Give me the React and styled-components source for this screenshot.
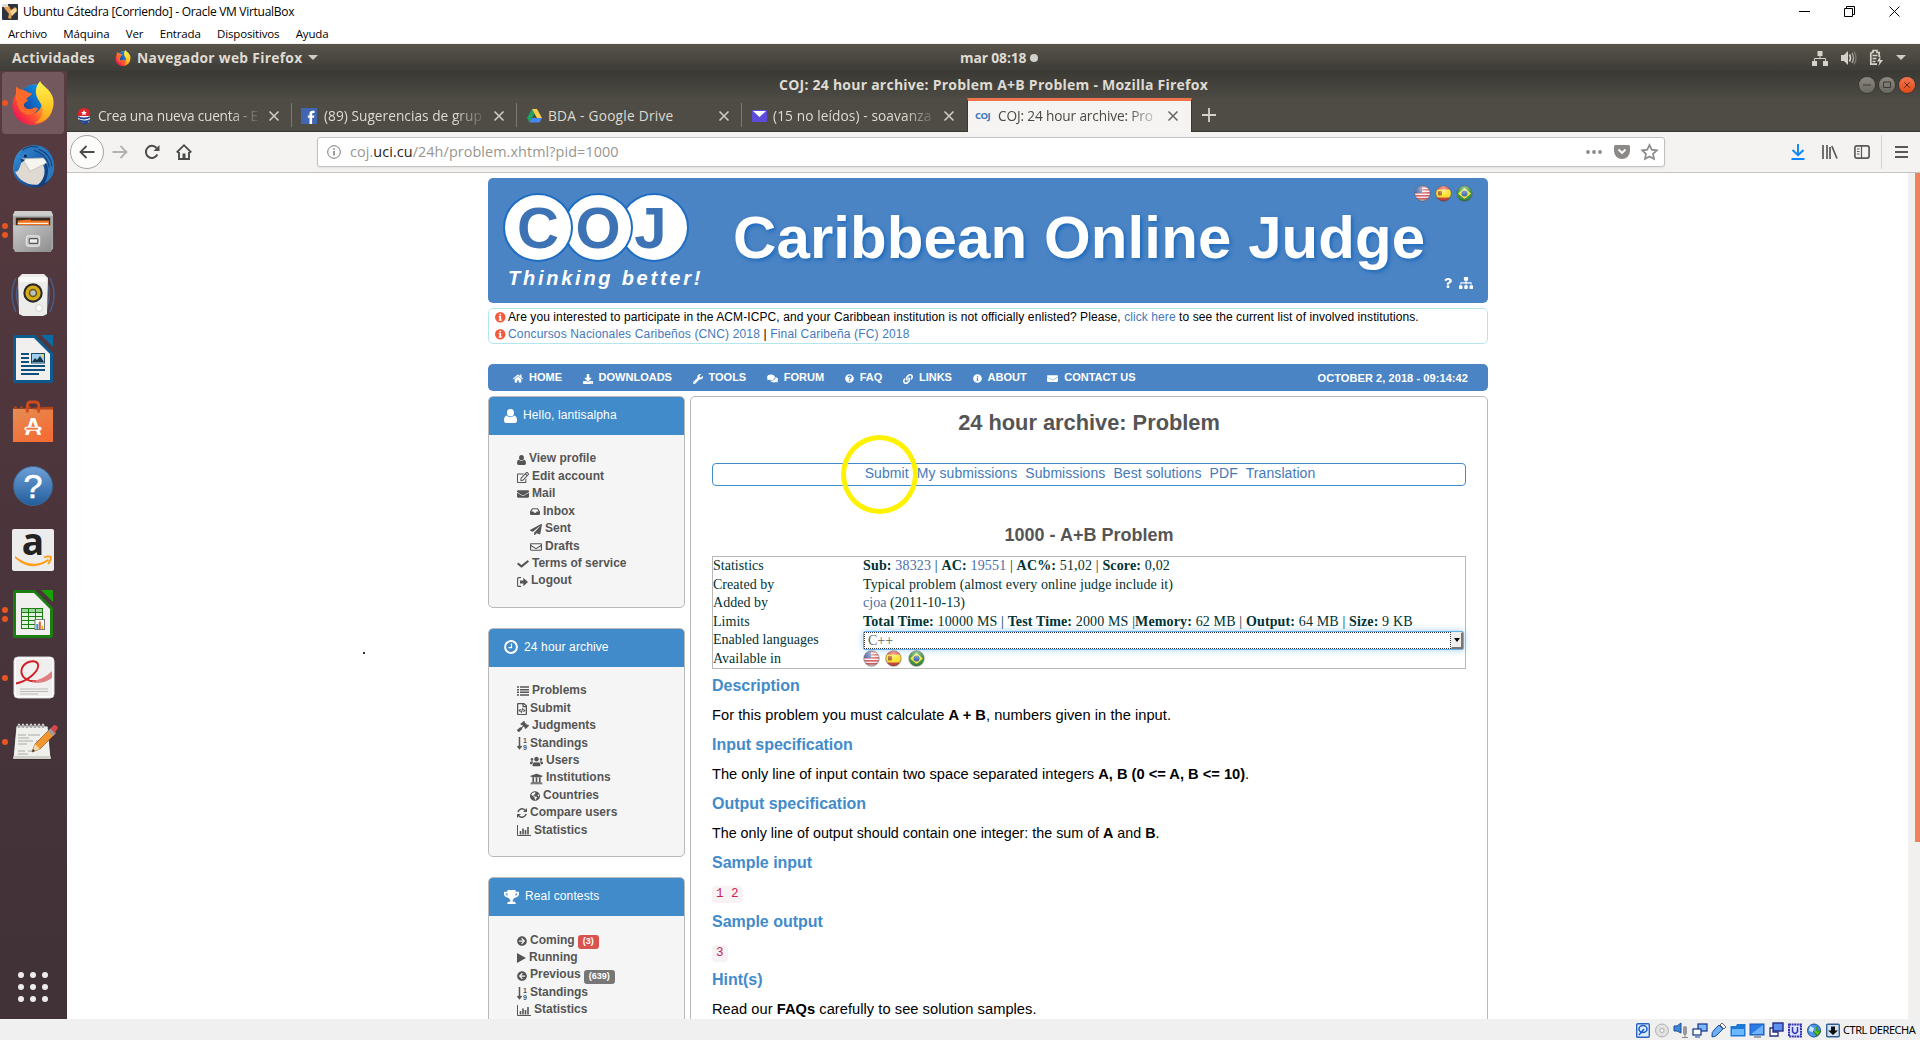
import React from 'react';
import styled, { createGlobalStyle, css } from 'styled-components';
import {
  FaHome, FaDownload, FaWrench, FaComments, FaQuestionCircle, FaLink, FaInfoCircle, FaEnvelope,
  FaRegEdit, FaInbox, FaPaperPlane, FaRegEnvelope, FaCheck,
  FaRegFileCode, FaGavel, FaUsers, FaUniversity, FaGlobeAmericas, FaTrophy,
  FaArrowCircleRight, FaArrowCircleLeft, FaSitemap, FaQuestion,
} from 'react-icons/fa';

const sans = '"Liberation Sans", Arial, sans-serif';
const serif = '"Liberation Serif", "Times New Roman", serif';
const ui = '"Open Sans", "Noto Sans", sans-serif';

const Global = createGlobalStyle`
  * { box-sizing: border-box; }
  body { margin: 0; background: #fff; font-family: ${sans}; overflow: hidden; }
  svg { display: block; flex: none; overflow: visible; }
`;

const Screen = styled.div`
  width: 1920px; height: 1040px; display: flex; flex-direction: column; overflow: hidden; background: #fff;
`;

/* ---------- VirtualBox window ---------- */
const VmTitle = styled.div`
  height: 21px; flex: none; display: flex; align-items: center; padding: 2px 20px 0 2px; background: #fff;
`;
const VmName = styled.span`
  font: 12px/18px ${ui}; color: #000; margin-left: 5px; flex: 1; letter-spacing: -0.29px; white-space: nowrap;
`;
const VmControls = styled.div`display: flex; gap: 34px; align-items: center;`;
const VmMenu = styled.div`
  height: 23px; flex: none; display: flex; gap: 16.3px; padding: 3px 8px 0; font: 11.5px/20px ${ui}; color: #000;
  border-bottom: 1px solid #f0f0f0; letter-spacing: -0.15px;
`;
const VmStatus = styled.div`
  height: 21px; flex: none; background: #f0f0f0; display: flex; align-items: center; justify-content: flex-end;
  gap: 3px; padding: 1px 2px 0 0;
`;
const HostKey = styled.span`
  font: 11px/18px "Noto Sans", sans-serif; color: #000; margin-left: -1px; width: 75px; letter-spacing: -0.45px; white-space: nowrap;
`;

/* ---------- GNOME shell ---------- */
const Panel = styled.div`
  height: 27px; flex: none; display: flex; align-items: center; padding: 0 14px 0 12px; color: #dfdbd2;
  background: linear-gradient(#58544b, #3e3c38); font: 700 13.8px/26px ${ui};
`;
const PanelLeft = styled.div`width: 948px; flex: none; display: flex; align-items: center;`;
const PanelApp = styled.div`display: flex; align-items: center; gap: 6px; margin-left: 20px;`;
const PanelStatus = styled.div`flex: 1; display: flex; align-items: center; gap: 12px; justify-content: flex-end;`;
const PanelText = styled.span`letter-spacing: ${p => p.$ls ?? 0.3}px; white-space: nowrap;`;
const ClockDot = styled.i`width: 8px; height: 8px; border-radius: 50%; background: #d2d0cb; margin: 1px 0 0 4px;`;
const Caret = styled.i`
  border: 5px solid transparent; border-top-color: #cfccc5; border-bottom: 0; margin-left: ${p => p.$ml || 0}px;
`;
const Desktop = styled.div`flex: 1; min-height: 0; display: flex;`;

const Dock = styled.div`
  width: 67px; flex: none; display: flex; flex-direction: column; padding: 1px 0 0 2px;
  background: linear-gradient(#573c41, #4e363c 35%, #47343b 65%, #403237);
`;
const DockItem = styled.div`
  width: 62px; height: 62px; margin-bottom: 1.9px; flex: none; border-radius: 4px; display: flex; align-items: center;
  background: ${p => (p.$active ? '#73595e' : 'transparent')};
`;
const DockDots = styled.div`width: 6px; display: flex; flex-direction: column; gap: 3px;`;
const DockDot = styled.i`width: 6px; height: 6px; border-radius: 50%; background: #e95420;`;
const DockArt = styled.div`margin-left: ${p => p.$ml}px;`;
const AppsGrid = styled.div`
  margin: auto 0 17px 16px; display: grid; grid-template-columns: repeat(3, 6px); gap: 6px;
`;
const AppsDot = styled.i`width: 6px; height: 6px; border-radius: 50%; background: #efecec;`;

/* ---------- Firefox ---------- */
const Browser = styled.div`flex: 1; min-width: 0; display: flex; flex-direction: column;`;
const WinTitle = styled.div`
  height: 27px; flex: none; display: flex; align-items: center; padding: 1px 5px 0 0;
  background: linear-gradient(#3a3934, #4c4a43); color: #dfdbd2; font: 700 14px/24px ${ui};
`;
const WinName = styled.div`flex: 1; text-align: center; padding-left: 65px; letter-spacing: 0.24px; white-space: nowrap;`;
const WinBtn = styled.div`
  width: 16px; height: 16px; margin-left: 4px; border-radius: 50%; display: flex; align-items: center; justify-content: center;
  background: ${p => (p.$close ? 'linear-gradient(#f4764c, #e0491a)' : 'linear-gradient(#8b887f, #6b6862)')};
  box-shadow: 0 0 0 1px #3a3833;
`;
const TabStrip = styled.div`
  height: 34px; flex: none; display: flex; align-items: flex-end; background: #4f4c45; border-bottom: 1px solid #393733;
`;
const Tab = styled.div`
  width: 225px; height: 33px; margin-bottom: ${p => (p.$active ? '-1px' : '0')}; display: flex; align-items: center;
  padding: 2px 13px 0 ${p => p.$pl || 9}px; font: 13.7px/30px ${ui};
  color: ${p => (p.$active ? '#4c4a45' : '#dfdbd2')};
  background: ${p => (p.$active ? '#f5f4f2' : 'linear-gradient(#7c7a74, #7c7a74) right 5px / 1px 24px no-repeat')};
  ${p => p.$active && css`border: 1px solid #393733; border-bottom: 0; border-top: 3px solid #f0744a; height: 34px; padding-top: 0; padding-bottom: 1px; background: #f5f4f2;`}
  ${p => p.$last && css`background: none;`}
`;
const TabText = styled.span`
  flex: 1; min-width: 0; margin: 0 6px 0 ${p => p.$ml || 7}px; overflow: hidden; white-space: nowrap; letter-spacing: ${p => p.$ls ?? -0.3}px;
  mask-image: ${p => (p.$fade ? 'linear-gradient(90deg, #000 calc(100% - 34px), transparent)' : 'none')};
`;
const CojFav = styled.span`width: 17px; font: 700 9.5px/14px ${ui}; color: #3b76bd; letter-spacing: -0.6px; margin-left: -1px;`;
const NewTab = styled.div`width: 33px; height: 33px; display: flex; align-items: center; justify-content: center;`;
const Toolbar = styled.div`
  height: 41px; flex: none; display: flex; align-items: center; background: #f4f3f1; border-bottom: 1px solid #c5c3c0; padding-left: 3px;
`;
const BackBtn = styled.div`
  width: 34px; height: 34px; border-radius: 50%; border: 1px solid #a5a3a0; background: #fcfcfb; display: flex; align-items: center; justify-content: center;
`;
const NavIcon = styled.div`width: 32px; display: flex; justify-content: center;`;
const UrlBar = styled.div`
  width: 1348px; height: 30px; margin-left: 117px; border: 1px solid #c3c1be; border-radius: 3px; background: #fff;
  display: flex; align-items: center; padding: 0 6px 0 9px; box-shadow: 0 1px 2px rgba(0,0,0,.08);
`;
const Url = styled.div`flex: 1; margin-left: 9px; font: 14.4px/24px ${ui}; color: #98968f; letter-spacing: 0.08px; b { font-weight: 400; color: #222; }`;
const UrlActions = styled.div`display: flex; gap: 11.5px; align-items: center;`;
const ToolRight = styled.div`margin-left: auto; display: flex; align-items: center; height: 100%;`;
const MenuBtn = styled.div`width: 39px; height: 34px; margin-left: 3px; border-left: 1px solid #d5d3d0; display: flex; align-items: center; justify-content: center;`;

/* ---------- Page ---------- */
const Viewport = styled.div`flex: 1; min-height: 0; display: flex; position: relative; background: #fff;`;
const Page = styled.div`flex: 1; min-width: 0; overflow: hidden; padding: 5px 0 0 421px;`;
const ScrollTrack = styled.div`width: 12px; flex: none; background: #f1f0ef; padding-left: 7px;`;
const ScrollThumb = styled.div`height: 669px; background: #f0815c;`;
const Speck = styled.i`position: absolute; left: 296px; top: 479px; width: 2px; height: 2px; background: #333;`;
const Container = styled.div`width: 1000px;`;

const Glyph = styled.span`
  width: ${p => p.$w}px; height: ${p => p.$h}px; flex: none; display: flex; svg { width: 100%; height: 100%; }
`;

const Banner = styled.header`
  height: 125px; background: #4b84c4; border-radius: 5px; display: flex; padding: 15px 0 0 15px;
`;
const Brand = styled.div`width: 230px; flex: none;`;
const Balls = styled.div`display: flex; height: 69px;`;
const Ball = styled.div`
  width: 70px; height: 69px; flex: none; border-radius: 50%; border: 2px solid #1c6dc3; background: #fff; color: #3d72b4;
  font: 700 58px/65px ${sans}; text-align: center; position: relative; z-index: ${p => p.$z}; margin-right: ${p => p.$mr || 0}px;
  text-indent: ${p => p.$shift || 0}px;
`;
const Motto = styled.div`font: italic 700 20px/24px ${sans}; letter-spacing: 2.75px; color: #fff; padding-left: 5px; margin-top: 4px; white-space: nowrap;`;
const SiteName = styled.h1`
  margin: 11px 0 0; width: 640px; flex: none; font: 700 60px/68px ${sans}; letter-spacing: 0.1px; color: #fff;
  text-shadow: 2px 2px 4px #1b68bd; white-space: nowrap;
`;
const BannerTools = styled.div`flex: 1; display: flex; flex-direction: column; justify-content: space-between; align-items: flex-end; padding: 0 15px 14.5px 0; margin-top: -8px;`;
const Flags = styled.div`display: flex; gap: ${p => p.$gap || 4}px; align-items: center;`;
const MiniTools = styled.div`display: flex; gap: 7px; color: #fff; align-items: center;`;

const Notice = styled.div`
  margin-top: 5px; height: 36px; border: 1px solid #b3e6ef; border-radius: 5px; padding: 0 0 0 6px; font: 12px/17px ${sans}; color: #000;
`;
const NoticeLine = styled.div`
  display: flex; align-items: center; gap: 2.5px; white-space: nowrap; letter-spacing: ${p => p.$ls}px; svg { color: #f5583c; }
`;
const Link = styled.a`color: ${p => p.$c || '#4479ba'};`;

const Nav = styled.nav`
  margin-top: 20px; height: 27px; border-radius: 5px; background: #4b84c4; color: #fff; display: flex; align-items: center;
  padding: 0 20px 0 25px; font: 700 11px/27px ${sans}; gap: 20.6px;
`;
const NavItem = styled.span`display: flex; align-items: center; gap: 6px; white-space: nowrap; ${Glyph} { margin-top: 2px; }`;
const DateText = styled.span`margin-left: auto; padding-top: 1px; letter-spacing: 0.08px;`;

const Columns = styled.div`display: flex; gap: 5px; margin-top: 5px; align-items: flex-start;`;
const Side = styled.aside`width: 197px; display: flex; flex-direction: column; gap: 20px;`;
const Box = styled.section`border: 1px solid #b9b9b9; border-radius: 5px; background: #f5f5f5; overflow: hidden;`;
const BoxHead = styled.div`
  height: 38px; background: #428bca; color: #fff; display: flex; align-items: center; gap: 6px; padding: 0 0 1px 15px;
  font: 12px/37px ${sans}; letter-spacing: 0.13px;
`;
const Menu = styled.div`padding: 15.4px 0 17.1px 28px; min-height: 160px;`;
const MenuRow = styled.div`
  height: 17.43px; display: flex; align-items: center; gap: 3px; padding-left: ${p => (p.$sub ? 13 : 0)}px;
  font: 700 12px/17.43px ${sans}; color: #555; white-space: nowrap;
  > svg, > ${Glyph} { margin-top: 1px; }
`;
const Badge = styled.span`
  height: 14px; margin: 3px 0 0 0; padding: 0 5px; border-radius: 3px; background: ${p => p.$c}; color: #fff; font: 700 9px/13px ${sans};
`;

const Main = styled.main`
  width: 798px; height: 900px; border: 1px solid #b9b9b9; border-radius: 5px; padding: 0 21px; position: relative;
`;
const PageTitle = styled.h2`margin: 0; font: 700 21.8px/50px ${sans}; color: #555; text-align: center; padding-top: 1px; height: 50px;`;
const SubNav = styled.div`
  margin-top: 16px; height: 23px; border: 1px solid #428bca; border-radius: 4px; display: flex; justify-content: center; gap: 8px;
  font: 14px/18px ${sans}; padding-left: 2px; letter-spacing: 0.07px;
`;
const Highlight = styled.i`position: absolute; left: 150px; top: 38px; width: 77px; height: 79px; border: 5px solid #fff200; border-radius: 50%;`;
const ProblemTitle = styled.h3`margin: 34px 0 6px; font: 700 18px/30px ${sans}; color: #555; text-align: center;`;
const Info = styled.div`
  border: 1px solid #b9b9b9; display: grid; grid-template-columns: 150px 1fr; grid-auto-rows: 18.5px; font: 14px/17px ${serif}; color: #033;
  white-space: nowrap;
`;
const Label = styled.div`letter-spacing: 0.02px;`;
const Cell = styled.div`letter-spacing: ${p => p.$ls || 0}px;`;
const Select = styled.div`
  height: 19px; margin: 0 1px 0 0; border: 1px solid #66afe9; border-radius: 2px; box-shadow: 0 0 7px rgba(102,175,233,.6); display: flex;
  color: #666; background: #fff;
`;
const SelectValue = styled.div`flex: 1; border: 1px dotted #333; padding-left: 3px; font: 14px/15px ${serif};`;
const SelectArrow = styled.div`
  width: 12px; border: 1px solid #eee; border-right: 2px solid #777; border-bottom: 2px solid #777; background: #f0efed; display: flex; align-items: center; justify-content: center;
`;
const SelectCaret = styled.i`border: 3px solid transparent; border-top: 4px solid #000; border-bottom: 0;`;
const Head = styled.h4`margin: 0; font: 700 16px/30px ${sans}; color: #428bca; letter-spacing: -0.03px;`;
const Body = styled.div`margin-top: 2.4px;`;
const Para = styled.p`margin: 0; height: 28.8px; font: ${p => p.$s || 14.67}px/28.8px ${sans}; color: #000; white-space: nowrap; letter-spacing: ${p => p.$ls || 0}px;`;
const Sample = styled.div`height: 28.8px; padding-top: 5px; line-height: 17px;`;
const Code = styled.code`
  display: inline-block; padding: 0 4px; background: #f9f2f4; color: #c7254e; border-radius: 4px; font: 12.6px/17px "Liberation Mono", monospace;
`;

/* ---------- Icons ---------- */
const X = ({ c, s = 10 }) => (
  <svg width={s} height={s} viewBox="0 0 10 10"><path d="M0.5 0.5L9.5 9.5M9.5 0.5L0.5 9.5" stroke={c} strokeWidth="1.6" fill="none" /></svg>
);

const Flag = ({ kind, s = 17 }) => (
  <svg width={s} height={s} viewBox="0 0 17 17">
    <defs>
      <clipPath id={'fc' + kind}><circle cx="8.5" cy="8.5" r="7.6" /></clipPath>
      <radialGradient id="gloss" cx=".5" cy=".2" r=".8"><stop offset="0" stopColor="#fff" stopOpacity=".55" /><stop offset=".6" stopColor="#fff" stopOpacity=".05" /><stop offset="1" stopColor="#000" stopOpacity=".3" /></radialGradient>
    </defs>
    <g clipPath={`url(#fc${kind})`}>
      {kind === 'us' && <>
        <rect width="17" height="17" fill="#f5eeee" />
        {[1, 4, 7, 10, 13].map(y => <rect key={y} y={y} width="17" height="1.6" fill="#d8555b" />)}
        <rect width="8" height="8" fill="#4a66a8" />
      </>}
      {kind === 'es' && <>
        <rect width="17" height="17" fill="#d93a2c" /><rect y="4.5" width="17" height="8" fill="#fbe122" /><rect x="3" y="6" width="4" height="4.5" rx="1" fill="#a85a25" />
      </>}
      {kind === 'br' && <>
        <rect width="17" height="17" fill="#2f9035" /><path d="M8.5 3L15 8.5 8.5 14 2 8.5z" fill="#f0e136" /><circle cx="8.5" cy="8.5" r="3" fill="#2f5ba8" />
      </>}
    </g>
    <circle cx="8.5" cy="8.5" r="7.8" fill="url(#gloss)" stroke="#555" strokeOpacity=".55" strokeWidth=".9" />
  </svg>
);

const InfoIcon = () => (
  <svg width="10.500" height="10.500" viewBox="0 0 12 12"><circle cx="6" cy="6" r="6" fill="currentColor" /><path d="M5 2h2v1.700H5zM4.200 4.700H7v4h.8V10H4.200V8.700H5V6h-.8z" fill="#fff" /></svg>
);
const ListIcon = () => (
  <svg width="12" height="10" viewBox="0 0 12 10"><path d="M0 1h2M3 1h9M0 3.700h2M3 3.700h9M0 6.300h2M3 6.300h9M0 9h2M3 9h9" stroke="#555" strokeWidth="1.600" /></svg>
);
const SyncIcon = () => (
  <svg width="10" height="10" viewBox="0 0 10 10"><path d="M1 4.200A4.100 4.100 0 0 1 8 2M9 5.800A4.100 4.100 0 0 1 2 8" stroke="#555" strokeWidth="1.500" fill="none" /><path d="M10 0v4H6zM0 10V6h4z" fill="#555" /></svg>
);
const ClockIcon = () => (
  <svg width="14" height="14" viewBox="0 0 14 14"><circle cx="7" cy="7" r="5.900" stroke="#fff" strokeWidth="2" fill="none" /><path d="M7.500 3.500v4.200H4.500" stroke="#fff" strokeWidth="1.200" fill="none" /></svg>
);
const PlayIcon = () => <svg width="9" height="10" viewBox="0 0 9 10"><path d="M0 0l9 5-9 5z" fill="#555" /></svg>;
const PersonIcon = ({ w, h }) => (
  <svg width={w} height={h} viewBox="0 0 13 14" preserveAspectRatio="none"><ellipse cx="6.500" cy="3.700" rx="3.500" ry="3.700" fill="currentColor" /><path d="M3 6.500Q0 7 0 11.500 0 14 2.200 14h8.600Q13 14 13 11.500 13 7 10 6.500 8.500 8.200 6.500 8.200 4.500 8.200 3 6.500z" fill="currentColor" /></svg>
);
const BarsIcon = () => (
  <svg width="14" height="11" viewBox="0 0 14 11"><path d="M.5 0V10.5H14" stroke="#555" fill="none" /><path d="M3.5 6v3.5M6 3.5v6M8.5 5v4.5M11 2v7.5" stroke="#555" strokeWidth="1.6" /></svg>
);
const SortIcon = () => (
  <svg width="10" height="13" viewBox="0 0 10 13"><path d="M2.5 0v11M.5 9l2 2.6 2-2.6" stroke="#555" fill="none" strokeWidth="1.5" />
    <text x="6" y="5.6" fontSize="7" fontWeight="700" fontFamily="Liberation Sans" fill="#555">1</text>
    <text x="6" y="12.6" fontSize="7" fontWeight="700" fontFamily="Liberation Sans" fill="#555">9</text></svg>
);
const LogoutIcon = () => (
  <svg width="11" height="10" viewBox="0 0 11 10"><path d="M4 .6H1.6Q.6.6.6 1.6v6.8q0 1 1 1H4" stroke="#555" fill="none" strokeWidth="1.1" /><path d="M3 3.4h3.3V.8L11 5 6.300 9.200V6.600H3z" fill="#555" /></svg>
);

const FirefoxIcon = ({ s = 44 }) => (
  <svg width={s} height={s} viewBox="0 0 44 46">
    <defs>
      <linearGradient id="ffo" x1=".9" y1=".1" x2=".1" y2=".8"><stop offset="0" stopColor="#fff14a" /><stop offset=".35" stopColor="#ffb01f" /><stop offset=".65" stopColor="#ff5a2e" /><stop offset="1" stopColor="#f0194f" /></linearGradient>
      <linearGradient id="ffb" x1="0" y1="1" x2="1" y2="0"><stop offset="0" stopColor="#1b3a92" /><stop offset="1" stopColor="#0a9bf5" /></linearGradient>
      <linearGradient id="ffy" x1="0" y1="0" x2="0" y2="1"><stop offset="0" stopColor="#fff44f" /><stop offset=".6" stopColor="#ffc928" /><stop offset="1" stopColor="#ff9a1e" /></linearGradient>
    </defs>
    <path d="M5 6c1.500 2 3 3 5 4.500C14 5 21 3.500 26 4l12 9c5 6 5 14 3 20-3 8-11 13-19 13C10 46 0 37 .5 25 .8 20 2 17 4.500 13 4 10 4 8 5 6z" fill="url(#ffo)" />
    <path d="M11 9c4-4 10-6 16-5l4 17c1 7-3 12-9 13-7 0-12-5-12-10 0-4 1-6 6-7 2-1 4-2 4-4-3 0-6-1-9-4z" fill="url(#ffb)" />
    <path d="M5 6c2 4 7 2 12 6 2 1 3 1 4 1-1 3-5 3-6 6l2 1c-2 2-6 3-4 7 2 3 7 3 10 1 2-1 5 0 4 2-4 6-13 7-18 1C5 26 3 16 5 6z" fill="#ff6a2b" />
    <path d="M29.500 0c1 5 11 8 13.500 18 2 9-2 19-9 23-5 3-10 3-10 3 8-5 10-13 7-19-3-5-6-8-6-14 0-5 2-8 4.500-11z" fill="url(#ffy)" />
  </svg>
);
const ThunderbirdIcon = () => (
  <svg width="44" height="45" viewBox="0 0 46 46">
    <defs><linearGradient id="tb" x1="0" y1="0" x2="1" y2="1"><stop offset="0" stopColor="#3fa0e0" /><stop offset=".5" stopColor="#1b5fae" /><stop offset="1" stopColor="#10295e" /></linearGradient></defs>
    <path d="M3 18C6 6 16 0 27 1c12 1 18 11 18 22S37 45 26 45C14 45 2 36 2 25z" fill="url(#tb)" />
    <path d="M4 28c4 3 6-7 8-13l20 3c5 8 4 18-4 24C18 43 8 38 4 28z" fill="#dedad2" />
    <path d="M12 15l8 13 18-9-4-5z" fill="#f6f4ef" stroke="#b9b4a8" strokeWidth=".7" />
    <path d="M9 12C16 4 28 6 34 13c6 8 6 18 1 28 8-5 11-12 10-20C44 8 34 0 24 1 17 1 11 5 9 12z" fill="#2b78bf" />
    <path d="M12 6c5-4 10-5 16-3M24 6c9 2 15 10 16 18M29 5c8 3 13 10 14 18M36 20c3 6 2 12-1 18" stroke="#123e7a" fill="none" strokeWidth="1.200" />
    <circle cx="15" cy="12" r="1.600" fill="#0c1f44" /><path d="M10 15l5 1-4 3z" fill="#163c6c" />
  </svg>
);
const FilesIcon = () => (
  <svg width="42" height="44" viewBox="0 0 44 46">
    <defs><linearGradient id="fl" x1="0" y1="0" x2="1" y2="1"><stop offset="0" stopColor="#c9c9c9" /><stop offset="1" stopColor="#8d8d8d" /></linearGradient></defs>
    <path d="M3 2h38l2 4v35l-2 3H3l-2-3V6z" fill="#aaa" /><path d="M3 2h38l2 5H1z" fill="#cecece" />
    <rect x="4" y="9" width="36" height="12" fill="#35281f" /><path d="M6 12l13-1 1 1h19v5H6z" fill="#e8701f" /><path d="M6 15h32" stroke="#fff2d8" strokeWidth="1.300" />
    <path d="M1 17h42l-2 28H3z" fill="url(#fl)" /><rect x="15" y="28" width="14" height="11" rx="2" fill="#c9c9c9" stroke="#eee" /><rect x="18" y="31" width="9" height="5" rx="1" fill="#eee" stroke="#555" strokeWidth="1.200" />
  </svg>
);
const RhythmIcon = () => (
  <svg width="48" height="46" viewBox="0 0 48 46">
    <path d="M7 6q-8 16 0 34M11 9q-7 13 0 28M41 6q8 16 0 34M37 9q7 13 0 28" stroke="#4a5c85" fill="none" strokeWidth="1.500" />
    <path d="M13 2h22l4 4-1 36-4 2H14l-4-2L9 6z" fill="#ececea" /><path d="M11 5h26v5H11z" fill="#f9f9f8" />
    <circle cx="24" cy="21" r="9.700" fill="#2b2a28" /><circle cx="24" cy="21" r="7.600" fill="#d8ac14" /><circle cx="24" cy="21" r="4.300" fill="#6b5c1b" /><circle cx="24" cy="21" r="2.700" fill="#b8c0c2" /><circle cx="30" cy="36" r="3.300" fill="#fff" stroke="#cfcfcc" />
  </svg>
);
const DocIcon = ({ c, d, calc }) => (
  <svg width="40" height="48" viewBox="0 0 40 48">
    <path d="M2 0h20l18 18v28q0 2-2 2H2q-2 0-2-2V2q0-2 2-2z" fill={c} />
    <path d="M3 3h18l16 16v26H3z" fill="#f1f0ef" /><path d="M28 0h12v12z" fill={d} />
    {calc ? <>
      <rect x="8" y="18" width="22" height="21" fill={c} />
      {[0, 1, 2, 3, 4].map(r => [0, 1, 2].map(k => <rect key={r + '-' + k} x={9 + k * 7} y={19 + r * 4} width="6" height="3" fill={r === 0 ? '#9ad89a' : '#e0f5dd'} />))}
      <rect x="22" y="29.500" width="9.500" height="10" fill="#fff" stroke="#777" /><rect x="23.300" y="34" width="2" height="5" fill="#3593d8" /><rect x="25.800" y="31.500" width="2" height="7.500" fill="#e0612e" /><rect x="28.300" y="35.500" width="2" height="3.500" fill="#edb62c" />
    </> : <>
      <path d="M8 19h8M8 23h8M8 27h8M8 31h24M8 35h24M8 39h18" stroke="#0b4f7c" strokeWidth="2" /><rect x="18.500" y="18.500" width="13" height="9.500" fill="#9fcfef" stroke="#184a68" /><path d="M19 27l3-4 2 2 3-4 4 6z" fill="#15354a" /><circle cx="29.500" cy="20.500" r="1.300" fill="#ffd33b" />
    </>}
  </svg>
);
const SoftwareIcon = () => (
  <svg width="42" height="44" viewBox="0 0 44 46">
    <defs><linearGradient id="sw" x1="0" y1="0" x2=".6" y2="1"><stop offset="0" stopColor="#e58d54" /><stop offset="1" stopColor="#f36d35" /></linearGradient></defs>
    <path d="M1 9h42v35H1z" fill="url(#sw)" /><path d="M1 9l3-3 3 4 3-4 3 4 5-4 5 4h20V7l-3 0" fill="#b3441c" />
    <path d="M16 13V6q0-4 4-4h4q4 0 4 4v7" stroke="#d04b1c" fill="none" strokeWidth="3" />
    <text x="22" y="37" textAnchor="middle" fontSize="25" fontWeight="700" fontFamily="Liberation Sans" fill="#fff">A</text><rect x="13" y="28" width="18" height="4" rx="2" fill="#fff" /><rect x="15" y="29" width="12" height="2" fill="#f0753e" />
  </svg>
);
const HelpIcon = () => (
  <svg width="42" height="42" viewBox="0 0 42 42">
    <defs><linearGradient id="hp" x1="0" y1="0" x2="0" y2="1"><stop offset="0" stopColor="#6fa0d6" /><stop offset="1" stopColor="#215e9c" /></linearGradient></defs>
    <circle cx="21" cy="21" r="19.500" fill="url(#hp)" stroke="#3e6694" />
    <text x="21" y="33" textAnchor="middle" fontSize="34" fontFamily="Liberation Sans" stroke="#fff" strokeWidth=".6" fill="#fff">?</text>
  </svg>
);
const AmazonIcon = () => (
  <svg width="42" height="42" viewBox="0 0 42 42">
    <rect width="42" height="42" rx="2" fill="#ececec" />
    <text x="21" y="26" textAnchor="middle" fontSize="37" fontWeight="700" fontFamily="Open Sans" fill="#222">a</text>
    <path d="M3 27q17 14 33 3l1 1.500Q19 44 3 29z" fill="#ff9b10" /><path d="M32 28.500q4-2 7-.5 0 4-3 7" stroke="#ff9b10" fill="none" strokeWidth="1.700" />
  </svg>
);
const EvinceIcon = () => (
  <svg width="42" height="44" viewBox="0 0 42 44">
    <rect x="1" y="1" width="40" height="41" rx="4" fill="#fff" stroke="#ddd" /><rect x="3" y="3" width="36" height="37" rx="2" fill="#f0efee" />
    <path d="M3 27.500C16 25 27 14 25 8 23 4 13 4 9 12c-3 9 6 14 14 13" fill="none" stroke="#cf2028" strokeWidth="1.900" />
    <path d="M20 25q11-2 19-10v7q-10 7-21 4z" fill="#dd6a6d" opacity=".85" />
    <path d="M7 33h28M7 35.500h28M7 38h18" stroke="#bbb" />
  </svg>
);
const GeditIcon = () => (
  <svg width="46" height="40" viewBox="0 0 46 40">
    <path d="M4 4h32l3 33H1z" fill="#efefeb" stroke="#2a2226" strokeWidth=".8" /><path d="M1.500 34h37l.5 3H1z" fill="#cfcfc8" />
    <path d="M6 13h8m2 0h12M6 16h11M6 19h15m3 0h5M6 22h9M6 29h7m3 0h4M6 32h10" stroke="#aaa" strokeWidth="1" />
    {[6, 10, 14, 18, 22, 26, 30].map(x => <path key={x} d={`M${x} 6V3q1-2.500 2 0v3`} stroke="#ddd" fill="#777" strokeWidth="1" />)}
    <path d="M20 30l3-8L38 7l5 5-15 15z" fill="#f0962e" stroke="#9a5414" strokeWidth=".7" /><path d="M20 30l3-8 5 5z" fill="#f2d6a8" /><path d="M20 30l1-3 2 2z" fill="#222" /><path d="M36 9l3-3 5 5-3 3z" fill="#9c9c9c" /><path d="M38.500 6.500L42 3q3 0 4 3l-3.500 5z" fill="#d94848" />
  </svg>
);

const VBoxIcon = () => (
  <svg width="16" height="16" viewBox="0 0 16 16"><rect width="16" height="16" rx="1" fill="#2c3540" /><path d="M1 2h6l2 4 4-3 2 2-5 5-1 5-3-1 1-4-4-5z" fill="#e8a04c" /><path d="M8 7l6-3 1 3-5 5z" fill="#f7d29b" /><rect width="6" height="3" fill="#ddd" /></svg>
);

const statusIcons = [
  <g key="hd"><rect x=".7" y=".7" width="12.600" height="13.600" rx="1" fill="#dcecff" stroke="#2b62c4" strokeWidth="1.400" /><ellipse cx="7" cy="6" rx="4" ry="3.500" fill="none" stroke="#1b5cc9" strokeWidth="1.500" /><path d="M3 12l5-6" stroke="#1b5cc9" strokeWidth="1.500" /></g>,
  <g key="cd"><circle cx="7" cy="7.500" r="6.500" fill="#e2e2e2" stroke="#b0b0b0" /><circle cx="7" cy="7.500" r="2" fill="#fff" stroke="#aaa" /></g>,
  <g key="au"><path d="M0 3h3l4-3v10L3 8H0z" fill="#3d86d8" stroke="#1c4f9a" /><rect x="9" y="3" width="4" height="9" rx="2" fill="#999" /><path d="M11 11v3M8 14.500h6" stroke="#888" /></g>,
  <g key="nt"><rect x="5" y="1" width="9" height="7" fill="#7cb7ff" stroke="#1f3f8c" strokeWidth="1.300" /><rect x="0" y="6" width="8" height="6" fill="#fff" stroke="#1f3f8c" strokeWidth="1.300" /><path d="M2 14h5" stroke="#1f3f8c" /></g>,
  <g key="us"><path d="M0 14q-1-5 3-8l4-4 4 4-4 4q-3 4-7 4z" fill="#6fb1f5" stroke="#1d4f9c" /><path d="M8 2l2-2 4 4-2 2z" fill="#fff" stroke="#666" /></g>,
  <g key="sf"><path d="M-.5 13.500V3H5l1-2h8.500v12.500z" fill="#1d78d6" /><path d="M1 12V6h12v6z" fill="#6ab8ff" /></g>,
  <g key="ds"><rect x="0" y="1" width="14" height="11" fill="#2b7be6" stroke="#1c56b0" /><path d="M1 11L13 2v9z" fill="#6db1ff" /><path d="M4 14h7" stroke="#888" strokeWidth="1.500" /></g>,
  <g key="cp"><rect x="4" y="0" width="10" height="8" fill="#5e8fef" stroke="#222c88" strokeWidth="1.400" /><path d="M1 5v8h8V9H4V5z" fill="#fff" stroke="#2a2f7c" strokeWidth="1.300" /></g>,
  <g key="cu"><rect x="1" y="1.500" width="12" height="12" fill="#dfe2ff" stroke="#3438b0" strokeWidth="2" strokeDasharray="2 .6" /><path d="M4.500 4v4.500q2.500 4 5 0V4" fill="none" stroke="#3438b0" strokeWidth="1.500" /></g>,
  <g key="ms"><circle cx="7" cy="7.500" r="6.500" fill="#4a95e8" stroke="#1c4f9a" /><path d="M3 3l4 2-1 4-4-1z" fill="#cfe8ff" /><path d="M6 8l4 4M10 3v5h4l-4 5-3-4" fill="#5cbf2f" stroke="#2d7d12" /></g>,
  <g key="kb"><rect x=".7" y="1.200" width="12.600" height="12.600" rx="1" fill="#cfe3f5" stroke="#355f91" strokeWidth="1.400" /><path d="M5 3.500h4v4h3L7 12 2 7.500h3z" fill="#111" /></g>,
];

const glyph = (I, h, w) => <Glyph $w={w || h} $h={h}><I preserveAspectRatio="none" /></Glyph>;

const navItems = [
  ['HOME', FaHome, 10, 9], ['DOWNLOADS', FaDownload, 10, 10], ['TOOLS', FaWrench, 10, 10], ['FORUM', FaComments, 11, 9],
  ['FAQ', FaQuestionCircle, 9, 9], ['LINKS', FaLink, 10, 10], ['ABOUT', FaInfoCircle, 9, 9], ['CONTACT US', FaEnvelope, 11, 9],
];

const boxes = [
  { title: 'Hello, lantisalpha', icon: <PersonIcon w={13} h={14} />, rows: [
    ['View profile', <PersonIcon w={9} h={10} />], ['Edit account', glyph(FaRegEdit, 11, 12)], ['Mail', glyph(FaEnvelope, 10, 12)],
    ['Inbox', glyph(FaInbox, 9, 10), 1], ['Sent', glyph(FaPaperPlane, 11, 12), 1], ['Drafts', glyph(FaRegEnvelope, 10, 12), 1],
    ['Terms of service', glyph(FaCheck, 10, 12)], ['Logout', <LogoutIcon />]] },
  { title: '24 hour archive', icon: <ClockIcon />, rows: [
    ['Problems', <ListIcon />], ['Submit', glyph(FaRegFileCode, 12, 10)], ['Judgments', glyph(FaGavel, 11, 12)], ['Standings', <SortIcon />],
    ['Users', glyph(FaUsers, 11, 13), 1], ['Institutions', glyph(FaUniversity, 12, 13), 1], ['Countries', glyph(FaGlobeAmericas, 10), 1],
    ['Compare users', <SyncIcon />], ['Statistics', <BarsIcon />]] },
  { title: 'Real contests', icon: glyph(FaTrophy, 14, 15), rows: [
    ['Coming', glyph(FaArrowCircleRight, 10), 0, '(3)', '#d9534f'], ['Running', <PlayIcon />], ['Previous', glyph(FaArrowCircleLeft, 10), 0, '(639)', '#777'],
    ['Standings', <SortIcon />], ['Statistics', <BarsIcon />]] },
];

const dock = [
  [<FirefoxIcon />, 1, true, 3], [<ThunderbirdIcon />, 0, false, 3], [<FilesIcon />, 2, false, 4], [<RhythmIcon />, 0, false, 1], [<DocIcon c="#0c5a8e" d="#0e6aa6" />, 0, false, 5],
  [<SoftwareIcon />, 0, false, 4], [<HelpIcon />, 0, false, 4], [<AmazonIcon />, 0, false, 4], [<DocIcon c="#1c7d12" d="#18a303" calc />, 2, false, 5], [<EvinceIcon />, 1, false, 4.5], [<GeditIcon />, 1, false, 4],
];

export default function App() {
  return (
    <Screen>
      <Global />
      <VmTitle>
        <VBoxIcon />
        <VmName>Ubuntu Cátedra [Corriendo] - Oracle VM VirtualBox</VmName>
        <VmControls>
          <svg width="11" height="11"><path d="M0 5.500h11" stroke="#000" /></svg>
          <svg width="11" height="11"><path d="M.5 2.500h8v8h-8zM2.500 2.500v-2h8v8h-2" stroke="#000" fill="none" /></svg>
          <svg width="11" height="11"><path d="M.5.5l10 10M10.500.5l-10 10" stroke="#000" /></svg>
        </VmControls>
      </VmTitle>
      <VmMenu>
        {['Archivo', 'Máquina', 'Ver', 'Entrada', 'Dispositivos', 'Ayuda'].map(t => <span key={t}>{t}</span>)}
      </VmMenu>
      <Panel>
        <PanelLeft>
          <PanelText>Actividades</PanelText>
          <PanelApp>
            <FirefoxIcon s={16} />
            <PanelText>Navegador web Firefox</PanelText>
            <Caret />
          </PanelApp>
        </PanelLeft>
        <PanelText $ls={-0.1}>mar 08:18</PanelText><ClockDot />
        <PanelStatus>
          <svg width="16" height="16" viewBox="0 0 16 16"><path d="M5.500 1h5v5h-5zM0 11h5v5H0zM11 11h5v5h-5z" fill="#d5d2ca" /><path d="M8 5v4M2.500 12V8.500h11V12" stroke="#d5d2ca" fill="none" /></svg>
          <svg width="17" height="16" viewBox="0 0 17 16"><path d="M1 5h3l4-4v14l-4-4H1z" fill="#d5d2ca" /><path d="M9.500 4.500q2 3.500 0 7" stroke="#d5d2ca" fill="none" strokeWidth="1.600" /><path d="M12 3q3 5 0 10" stroke="#aaa79f" fill="none" strokeWidth="1.400" /><path d="M14 1.500q4 6.500 0 13" stroke="#7c7971" fill="none" strokeWidth="1.300" /></svg>
          <svg width="15" height="17" viewBox="0 0 15 17"><path d="M1.800 3.500H4V1.500h4v2h2.200V8M8 15.200H1.800V3.500" stroke="#d5d2ca" fill="none" strokeWidth="1.700" /><path d="M3.500 6.500h5M3.500 9.500h4M3.500 12.500h3" stroke="#d5d2ca" strokeWidth="1.400" /><path d="M11.500 7L8 12.500h2.500L9.500 17l4.500-6h-2.800z" fill="#d5d2ca" /></svg>
          <Caret />
        </PanelStatus>
      </Panel>
      <Desktop>
        <Dock>
          {dock.map(([icon, dots, active, ml], i) => (
            <DockItem key={i} $active={active}>
              <DockDots>{Array.from({ length: dots }, (_, k) => <DockDot key={k} />)}</DockDots>
              <DockArt $ml={ml}>{icon}</DockArt>
            </DockItem>
          ))}
          <AppsGrid>{Array.from({ length: 9 }, (_, k) => <AppsDot key={k} />)}</AppsGrid>
        </Dock>
        <Browser>
          <WinTitle>
            <WinName>COJ: 24 hour archive: Problem A+B Problem - Mozilla Firefox</WinName>
            <WinBtn><svg width="8" height="8"><path d="M0 4h8" stroke="#3c3b37" /></svg></WinBtn>
            <WinBtn><svg width="8" height="8"><path d="M.5 1h7v5.500h-7z" stroke="#3c3b37" fill="none" /></svg></WinBtn>
            <WinBtn $close><X c="#5a2410" s={6} /></WinBtn>
          </WinTitle>
          <TabStrip>
            <Tab $pl={10}>
              <svg width="14" height="16" viewBox="0 0 14 16"><path d="M1 8q-1-8 6-8t6 8z" fill="#d9252c" /><path d="M7 2l.9 2h2l-1.500 1.300.6 2L7 6.200 5 7.300l.6-2L4 4h2z" fill="#fff" /><path d="M1 8h12v3q0 4-5 5l-7-5z" fill="#fff" /><path d="M1 9q6 3 12 0M2 12q6 3 11 0M5 15q4 1 6-1" stroke="#23448f" strokeWidth="1.800" fill="none" /></svg>
              <TabText $fade $ls={-0.25}>Crea una nueva cuenta - E</TabText><X c="#cfccc4" />
            </Tab>
            <Tab>
              <svg width="16" height="16" viewBox="0 0 16 16"><rect width="16" height="16" fill="#4267b2" /><path d="M8.500 16V9.800H6.800V7.400h1.700V5.700q0-3 3-3h2v2.300h-1.300q-1.100 0-1.100 1v1.400h2.300l-.4 2.400h-1.900V16z" fill="#fff" /></svg>
              <TabText $fade $ls={0.03}>(89) Sugerencias de grup</TabText><X c="#cfccc4" />
            </Tab>
            <Tab $pl={10}>
              <svg width="15" height="14" viewBox="0 0 15 14"><path d="M5 0L0 9l2.500 4.500 5-9z" fill="#1fa463" /><path d="M5 0h5l5 9h-5z" fill="#ffcf48" /><path d="M2.500 13.500L5 9h10l-2.500 4.500z" fill="#4688f4" /></svg>
              <TabText $ml={6} $ls={0.25}>BDA - Google Drive</TabText><X c="#cfccc4" />
            </Tab>
            <Tab $last $pl={10}>
              <svg width="15" height="12" viewBox="0 0 15 12"><rect width="15" height="12" rx="1" fill="#5e4bd8" /><path d="M1 1h13L7.500 7z" fill="#fff" /></svg>
              <TabText $fade $ml={6} $ls={0.1}>(15 no leídos) - soavanza</TabText><X c="#cfccc4" />
            </Tab>
            <Tab $active $pl={8}>
              <CojFav>COJ</CojFav>
              <TabText $fade $ml={6} $ls={-0.16}>COJ: 24 hour archive: Pro</TabText><X c="#6b6964" />
            </Tab>
            <NewTab><svg width="14" height="14"><path d="M7 0v14M0 7h14" stroke="#d5d2ca" strokeWidth="1.800" /></svg></NewTab>
          </TabStrip>
          <Toolbar>
            <BackBtn><svg width="16" height="14"><path d="M15.500 7H1.500M7.500 1l-6 6 6 6" stroke="#4c4c4b" fill="none" strokeWidth="1.800" /></svg></BackBtn>
            <NavIcon><svg width="16" height="14"><path d="M.5 7h14M8.500 1l6 6-6 6" stroke="#b3b2b0" fill="none" strokeWidth="1.800" /></svg></NavIcon>
            <NavIcon><svg width="16" height="16" viewBox="0 0 16 16"><path d="M13.300 10.500A6 6 0 1 1 12.500 4" stroke="#4c4c4b" fill="none" strokeWidth="2" /><path d="M15.500 1v6h-6z" fill="#4c4c4b" /></svg></NavIcon>
            <NavIcon><svg width="16" height="16" viewBox="0 0 16 16"><path d="M.7 8.500L8 1.200l7.300 7.300" stroke="#4c4c4b" fill="none" strokeWidth="1.800" /><path d="M3 8v7h10V8" stroke="#4c4c4b" fill="none" strokeWidth="1.900" /><path d="M6.500 9.500h3V15h-3z" fill="#4c4c4b" /></svg></NavIcon>
            <UrlBar>
              <svg width="14" height="14"><circle cx="7" cy="7" r="6.300" stroke="#777" fill="none" /><path d="M7 6v4.500M7 3.300v1.400" stroke="#777" strokeWidth="1.500" /></svg>
              <Url>coj.<b>uci.cu</b>/24h/problem.xhtml?pid=1000</Url>
              <UrlActions>
                <svg width="16" height="4"><circle cx="2" cy="2" r="1.900" fill="#8b8a88" /><circle cx="8" cy="2" r="1.900" fill="#8b8a88" /><circle cx="14" cy="2" r="1.900" fill="#8b8a88" /></svg>
                <svg width="16" height="14" viewBox="0 0 16 14"><path d="M1.500 0h13Q16 0 16 1.500V6a8 8 0 0 1-16 0V1.500Q0 0 1.500 0z" fill="#8b8a88" /><path d="M4.500 4.500L8 8l3.500-3.500" stroke="#fff" strokeWidth="1.900" fill="none" /></svg>
                <svg width="17" height="16" viewBox="0 0 17 16"><path d="M8.500 1l2.200 4.700 5.100.6-3.800 3.500 1 5.100-4.500-2.500L4 14.900l1-5.100L1.200 6.300l5.100-.6z" fill="none" stroke="#8b8a88" strokeWidth="1.700" /></svg>
              </UrlActions>
            </UrlBar>
            <ToolRight>
              <NavIcon><svg width="14" height="16"><path d="M7 0v11M1.500 6L7 11.300 12.500 6M.5 15h13" stroke="#0a84ff" strokeWidth="1.900" fill="none" /></svg></NavIcon>
              <NavIcon><svg width="16" height="14"><path d="M1 0v14M5 0v14M8 2v12M9.800 1L15 13.500" stroke="#5a5957" strokeWidth="1.700" fill="none" /></svg></NavIcon>
              <NavIcon><svg width="16" height="14"><rect x=".9" y=".9" width="14.200" height="12.200" rx="2" stroke="#5a5957" strokeWidth="1.700" fill="none" /><path d="M7.500 1v12M3 4h2.500M3 6.500h2.500M3 9h2.500" stroke="#5a5957" strokeWidth="1.200" /></svg></NavIcon>
              <MenuBtn><svg width="13" height="12"><path d="M0 1h13M0 6h13M0 11h13" stroke="#5a5957" strokeWidth="1.800" /></svg></MenuBtn>
            </ToolRight>
          </Toolbar>
          <Viewport>
            <Page>
              <Container>
                <Banner>
                  <Brand>
                    <Balls>
                      <Ball $z={3} $mr={-10}>C</Ball><Ball $z={2} $mr={-14}>O</Ball><Ball $z={1} $shift={-7}>J</Ball>
                    </Balls>
                    <Motto>Thinking better!</Motto>
                  </Brand>
                  <SiteName>Caribbean Online Judge</SiteName>
                  <BannerTools>
                    <Flags><Flag kind="us" /><Flag kind="es" /><Flag kind="br" /></Flags>
                    <MiniTools>{glyph(FaQuestion, 10, 8)}{glyph(FaSitemap, 12, 14)}</MiniTools>
                  </BannerTools>
                </Banner>
                <Notice>
                  <NoticeLine $ls={0.085}><InfoIcon /><span>Are you interested to participate in the ACM-ICPC, and your Caribbean institution is not officially enlisted? Please, <Link>click here</Link> to see the current list of involved institutions.</span></NoticeLine>
                  <NoticeLine $ls={0.16}><InfoIcon /><span><Link>Concursos Nacionales Caribeños (CNC) 2018</Link> | <Link>Final Caribeña (FC) 2018</Link></span></NoticeLine>
                </Notice>
                <Nav>
                  {navItems.map(([t, I, w, h]) => <NavItem key={t}>{glyph(I, h, w)}{t}</NavItem>)}
                  <DateText>OCTOBER 2, 2018 - 09:14:42</DateText>
                </Nav>
                <Columns>
                  <Side>
                    {boxes.map(b => (
                      <Box key={b.title}>
                        <BoxHead>{b.icon}{b.title}</BoxHead>
                        <Menu>
                          {b.rows.map(([t, icon, sub, badge, c]) => (
                            <MenuRow key={t} $sub={sub}>{icon}{t}{badge && <Badge $c={c}>{badge}</Badge>}</MenuRow>
                          ))}
                        </Menu>
                      </Box>
                    ))}
                  </Side>
                  <Main>
                    <PageTitle>24 hour archive: Problem</PageTitle>
                    <SubNav>
                      {['Submit', 'My submissions', 'Submissions', 'Best solutions', 'PDF', 'Translation'].map(t => <Link key={t}>{t}</Link>)}
                    </SubNav>
                    <Highlight />
                    <ProblemTitle>1000 - A+B Problem</ProblemTitle>
                    <Info>
                      <Label>Statistics</Label>
                      <Cell $ls={0.16}><b>Sub:</b> <Link $c="#4a6da7">38323</Link> | <b>AC:</b> <Link $c="#4a6da7">19551</Link> | <b>AC%:</b> 51,02 | <b>Score:</b> 0,02</Cell>
                      <Label>Created by</Label><Cell $ls={0.08}>Typical problem (almost every online judge include it)</Cell>
                      <Label>Added by</Label><Cell $ls={0.06}><Link $c="#4a6da7">cjoa</Link> (2011-10-13)</Cell>
                      <Label>Limits</Label>
                      <Cell $ls={0.14}><b>Total Time:</b> 10000 MS | <b>Test Time:</b> 2000 MS |<b>Memory:</b> 62 MB | <b>Output:</b> 64 MB | <b>Size:</b> 9 KB</Cell>
                      <Label>Enabled languages</Label>
                      <Select><SelectValue>C++</SelectValue><SelectArrow><SelectCaret /></SelectArrow></Select>
                      <Label>Available in</Label>
                      <Flags $gap={5.3}><Flag kind="us" /><Flag kind="es" /><Flag kind="br" /></Flags>
                    </Info>
                    <Body>
                      <Head>Description</Head>
                      <Para $ls={0.03}>For this problem you must calculate <b>A + B</b>, numbers given in the input.</Para>
                      <Head>Input specification</Head>
                      <Para>The only line of input contain two space separated integers <b>A, B (0 &lt;= A, B &lt;= 10)</b>.</Para>
                      <Head>Output specification</Head>
                      <Para $s={14.3}>The only line of output should contain one integer: the sum of <b>A</b> and <b>B</b>.</Para>
                      <Head>Sample input</Head>
                      <Sample><Code>1 2</Code></Sample>
                      <Head>Sample output</Head>
                      <Sample><Code>3</Code></Sample>
                      <Head>Hint(s)</Head>
                      <Para $ls={0.04}>Read our <b>FAQs</b> carefully to see solution samples.</Para>
                    </Body>
                  </Main>
                </Columns>
              </Container>
            </Page>
            <ScrollTrack><ScrollThumb /></ScrollTrack>
            <Speck />
          </Viewport>
        </Browser>
      </Desktop>
      <VmStatus>
        {statusIcons.map((g, i) => <svg key={i} width="16" height="15" viewBox="-1 0 16 15">{g}</svg>)}
        <HostKey>CTRL DERECHA</HostKey>
      </VmStatus>
    </Screen>
  );
}
